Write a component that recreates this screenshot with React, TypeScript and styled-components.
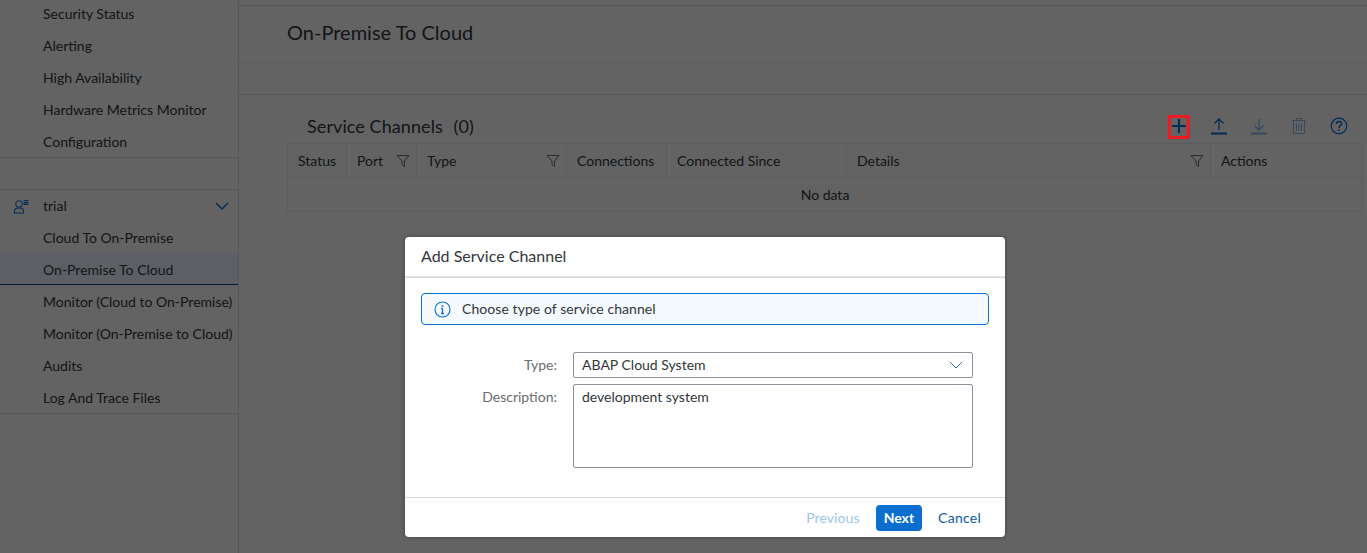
import React from "react";
import styled, { createGlobalStyle } from "styled-components";

const Global = createGlobalStyle`
  html, body { margin: 0; padding: 0; }
  body { font-family: "Lato", "Noto Sans", "Liberation Sans", sans-serif; }
  * { box-sizing: border-box; }
`;

const Page = styled.div`
  position: relative;
  width: 1367px;
  height: 553px;
  overflow: hidden;
  display: flex;
  background: #f7f7f7;
  color: #32363a;
  font-size: 14px;
`;

const Sidebar = styled.nav`
  width: 239px;
  flex: none;
  border-right: 1px solid #d9d9d9;
  margin-top: -3px;
  height: 557px;
`;

const NavGroup = styled.ul`
  list-style: none;
  margin: 0;
  padding: 0;
  border-bottom: 1px solid #d9d9d9;
  & + & { margin-top: 32px; }
`;

const NavRow = styled.li<{ $selected?: boolean }>`
  height: 32px;
  display: flex;
  align-items: center;
  padding-left: 43px;
  position: relative;
  white-space: nowrap;
  background: ${(p) => (p.$selected ? "#e5f0fa" : "transparent")};
  box-shadow: ${(p) => (p.$selected ? "inset 0 -1px 0 #0a3d73" : "none")};
`;

const NavHeadIcon = styled.svg`
  position: absolute;
  left: 13px;
  top: 8px;
`;

const NavChevron = styled.svg`
  position: absolute;
  right: 9px;
  top: 11px;
`;

const GroupHead = styled(NavRow)`
  border-top: 1px solid #d9d9d9;
  margin-top: -1px;
`;

const Main = styled.main`
  flex: 1;
  min-width: 0;
  display: flex;
  flex-direction: column;
`;

const TopStrip = styled.div`
  height: 6px;
  border-bottom: 1px solid #d9d9d9;
`;

const TitleBar = styled.header`
  height: 57px;
  display: flex;
  align-items: center;
  padding: 0 0 5px 48px;
  border-bottom: 1px solid #ececec;
`;

const Title = styled.h1`
  margin: 0;
  font-size: 20px;
  font-weight: 400;
`;

const TabStrip = styled.div`
  height: 32px;
  border-bottom: 1px solid #d9d9d9;
`;

const Section = styled.section`
  padding: 16px 4px 0 48px;
`;

const TableBar = styled.div`
  height: 32px;
  display: flex;
  align-items: center;
  padding: 0 0 2px 20px;
`;

const TableTitle = styled.h2`
  margin: 0;
  font-size: 18px;
  font-weight: 400;
  flex: 1;
  letter-spacing: 0.08px;
`;

const Count = styled.span`
  margin-left: 6px;
`;

const Tools = styled.div`
  display: flex;
  align-items: center;
  margin-right: 4px;
`;

const Tool = styled.span`
  width: 40px;
  height: 24px;
  display: flex;
  align-items: center;
  justify-content: center;
`;

const Table = styled.div`
  border: 1px solid #e5e5e5;
  background: #f7f7f7;
`;

const HeadRow = styled.div`
  display: grid;
  grid-template-columns: 59px 70px 150px 100px 180px 364px 1fr;
  height: 34px;
  border-bottom: 1px solid #e5e5e5;
`;

const HeadCell = styled.div`
  display: flex;
  align-items: center;
  justify-content: space-between;
  padding: 0 6px 0 10px;
  border-right: 1px solid #e5e5e5;
  &:last-child { border-right: 0; }
`;

const Empty = styled.div`
  height: 33px;
  display: flex;
  align-items: center;
  justify-content: center;
`;

const Overlay = styled.div`
  position: absolute;
  inset: 0;
  background: rgba(0, 0, 0, 0.6);
`;

const Marker = styled.div`
  position: absolute;
  left: 1168px;
  top: 115px;
  width: 22px;
  height: 24px;
  border: 3px solid #ed1c24;
`;

const Dialog = styled.div`
  position: absolute;
  left: 405px;
  top: 237px;
  width: 600px;
  height: 300px;
  background: #fff;
  border-radius: 4px;
  box-shadow: 0 0 4px rgba(0, 0, 0, 0.35);
  display: flex;
  flex-direction: column;
`;

const DialogHead = styled.div`
  height: 40px;
  display: flex;
  align-items: center;
  padding: 0 16px 2px;
  font-size: 16px;
  box-shadow: 0 1px 1px rgba(0, 0, 0, 0.14);
  border-bottom: 1px solid #e5e5e5;
`;

const DialogBody = styled.div`
  flex: 1;
  padding: 16px 16px 0;
`;

const Strip = styled.div`
  height: 32px;
  border: 1px solid #0a6ed1;
  border-radius: 4px;
  background: #f5faff;
  display: flex;
  align-items: center;
  gap: 11px;
  padding: 0 0 2px 12px;
  letter-spacing: 0.07px;
`;

const StripIcon = styled.svg`
  margin-top: 2px;
`;

const Form = styled.div`
  display: grid;
  grid-template-columns: 136px 400px;
  column-gap: 16px;
  row-gap: 6px;
  margin-top: 27px;
`;

const Label = styled.label`
  text-align: right;
  color: #6a6d70;
  line-height: 26px;
`;

const Select = styled.div`
  height: 26px;
  border: 1px solid #89919a;
  border-radius: 2px;
  display: flex;
  align-items: center;
  justify-content: space-between;
  padding: 0 9px 2px 8px;
`;

const SelectArrow = styled.svg`
  margin-top: 2px;
`;

const Area = styled.div`
  height: 84px;
  border: 1px solid #89919a;
  border-radius: 2px;
  padding: 3px 8px;
  line-height: 18px;
`;

const DialogFoot = styled.div`
  height: 40px;
  border-top: 1px solid #d9d9d9;
  display: flex;
  align-items: center;
  justify-content: flex-end;
  padding-right: 16px;
  gap: 8px;
`;

const spacing = { primary: "0", disabled: "0.1px", ghost: "0.25px" };

const FootButton = styled.span<{ $variant: "ghost" | "primary" | "disabled" }>`
  height: 26px;
  display: flex;
  align-items: center;
  padding: 0 8px;
  border-radius: 4px;
  letter-spacing: ${(p) => spacing[p.$variant]};
  color: ${(p) =>
    p.$variant === "primary" ? "#fff" : p.$variant === "disabled" ? "#9dc5ec" : "#0a5aa8"};
  background: ${(p) => (p.$variant === "primary" ? "#0a6ed1" : "transparent")};
  font-weight: ${(p) => (p.$variant === "primary" ? 700 : 400)};
`;

const C = "#0a6ed1";

const Filter = () => (
  <svg width="14" height="14" viewBox="0 0 14 14" fill="none" stroke="#6a6d70" strokeWidth="1">
    <path d="M1 1.5h12L8.5 7v5.5L6 10.5V7z" />
  </svg>
);

const columns = [
  { label: "Status" },
  { label: "Port", filter: true },
  { label: "Type", filter: true },
  { label: "Connections" },
  { label: "Connected Since" },
  { label: "Details", filter: true },
  { label: "Actions" },
];

export default function App() {
  return (
    <Page>
      <Global />
      <Sidebar>
        <NavGroup>
          <NavRow>Security Status</NavRow>
          <NavRow>Alerting</NavRow>
          <NavRow>High Availability</NavRow>
          <NavRow>Hardware Metrics Monitor</NavRow>
          <NavRow>Configuration</NavRow>
        </NavGroup>
        <NavGroup>
          <GroupHead>
            <NavHeadIcon width="18" height="16" viewBox="0 0 18 16" fill="none" stroke={C} strokeWidth="1.1">
              <circle cx="6" cy="6" r="3.2" />
              <path d="M1.5 15v-2c0-1.9 1.8-3 3.5-3h2c1.7 0 3.5 1.1 3.5 3v2z" />
              <path d="M10.5 2.6h5M10.5 4.6h5M10.5 6.4h5" />
            </NavHeadIcon>
            trial
            <NavChevron width="14" height="10" viewBox="0 0 14 10" fill="none" stroke={C} strokeWidth="1.5">
              <path d="M1 2l6 6 6-6" />
            </NavChevron>
          </GroupHead>
          <NavRow>Cloud To On-Premise</NavRow>
          <NavRow $selected>On-Premise To Cloud</NavRow>
          <NavRow>Monitor (Cloud to On-Premise)</NavRow>
          <NavRow>Monitor (On-Premise to Cloud)</NavRow>
          <NavRow>Audits</NavRow>
          <NavRow>Log And Trace Files</NavRow>
        </NavGroup>
      </Sidebar>
      <Main>
        <TopStrip />
        <TitleBar>
          <Title>On-Premise To Cloud</Title>
        </TitleBar>
        <TabStrip />
        <Section>
          <TableBar>
            <TableTitle>
              Service Channels <Count>(0)</Count>
            </TableTitle>
            <Tools>
              <Tool>
                <svg width="16" height="16" viewBox="0 0 16 16" stroke={C} strokeWidth="2">
                  <path d="M8 1v14M1 8h14" />
                </svg>
              </Tool>
              <Tool>
                <svg width="18" height="18" viewBox="0 0 18 18" fill="none" stroke={C} strokeWidth="1.3">
                  <path d="M9 13V2M4.5 6.5L9 2l4.5 4.5" />
                  <path d="M1 16.5h16" strokeWidth="2" />
                </svg>
              </Tool>
              <Tool>
                <svg width="18" height="18" viewBox="0 0 18 18" fill="none" stroke={C} strokeOpacity="0.45" strokeWidth="1.3">
                  <path d="M9 2v11M4.5 8.5L9 13l4.5-4.5" />
                  <path d="M1 16.5h16" strokeWidth="2" />
                </svg>
              </Tool>
              <Tool>
                <svg width="16" height="18" viewBox="0 0 16 18" fill="none" stroke={C} strokeOpacity="0.45" strokeWidth="1">
                  <path d="M1 3.5h14M5.5 3V1.5h5V3M2.5 4v12.5h11V4M5.5 6.5v7.5M8 6.5v7.5M10.5 6.5v7.5" />
                </svg>
              </Tool>
              <Tool>
                <svg width="18" height="18" viewBox="0 0 18 18" fill="none" stroke={C} strokeWidth="1.2">
                  <circle cx="9" cy="9" r="7.8" />
                  <path d="M6.4 7c0-1.6 1.2-2.5 2.6-2.5s2.6.9 2.6 2.3c0 2.1-2.6 2-2.6 4.2" strokeWidth="1.5" />
                  <path d="M9 12.3v1.7" strokeWidth="1.6" />
                </svg>
              </Tool>
            </Tools>
          </TableBar>
          <Table>
            <HeadRow>
              {columns.map((c) => (
                <HeadCell key={c.label}>
                  {c.label}
                  {c.filter && <Filter />}
                </HeadCell>
              ))}
            </HeadRow>
            <Empty>No data</Empty>
          </Table>
        </Section>
      </Main>
      <Overlay />
      <Marker />
      <Dialog>
        <DialogHead>Add Service Channel</DialogHead>
        <DialogBody>
          <Strip>
            <StripIcon width="17" height="17" viewBox="0 0 17 17" fill="none" stroke={C}>
              <circle cx="8.5" cy="8.5" r="7.5" strokeWidth="1.1" />
              <path d="M8.5 7.5v5M7 7.5h1.5M7 12.5h3" strokeWidth="1.3" />
              <path d="M8.5 4.2v1.6" strokeWidth="1.7" />
            </StripIcon>
            Choose type of service channel
          </Strip>
          <Form>
            <Label>Type:</Label>
            <Select>
              ABAP Cloud System
              <SelectArrow width="14" height="8" viewBox="0 0 14 8" fill="none" stroke="#3f6f9f" strokeWidth="1">
                <path d="M1 1l6 6 6-6" />
              </SelectArrow>
            </Select>
            <Label>Description:</Label>
            <Area>development system</Area>
          </Form>
        </DialogBody>
        <DialogFoot>
          <FootButton $variant="disabled">Previous</FootButton>
          <FootButton $variant="primary">Next</FootButton>
          <FootButton $variant="ghost">Cancel</FootButton>
        </DialogFoot>
      </Dialog>
    </Page>
  );
}
